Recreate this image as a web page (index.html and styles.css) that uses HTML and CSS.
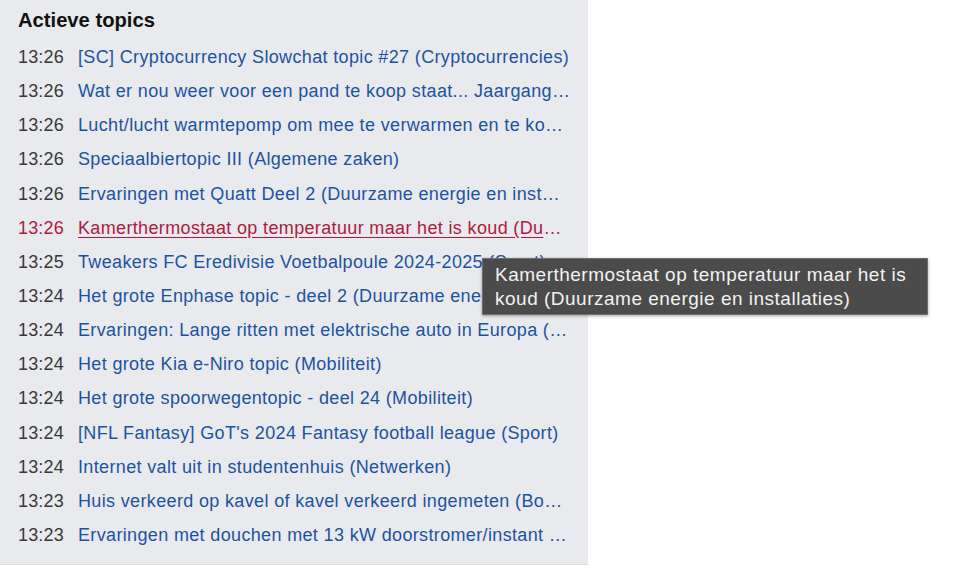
FILE: index.html
```html
<!DOCTYPE html>
<html>
<head>
<meta charset="utf-8">
<link rel="stylesheet" href="styles.css">
</head>
<body>
<div class="panel">
  <h2 class="title">Actieve topics</h2>
  <ul class="list">
    <li class="row"><span class="time">13:26</span><a class="topic" href="#">[SC] Cryptocurrency Slowchat topic #27 (Cryptocurrencies)</a></li>
    <li class="row"><span class="time">13:26</span><a class="topic" href="#">Wat er nou weer voor een pand te koop staat... Jaargang 4 (Wonen)</a></li>
    <li class="row"><span class="time">13:26</span><a class="topic" href="#">Lucht/lucht warmtepomp om mee te verwarmen en te koelen (Duurzame energie en installaties)</a></li>
    <li class="row"><span class="time">13:26</span><a class="topic" href="#">Speciaalbiertopic III (Algemene zaken)</a></li>
    <li class="row"><span class="time">13:26</span><a class="topic" href="#">Ervaringen met Quatt Deel 2 (Duurzame energie en installaties)</a></li>
    <li class="row hover"><span class="time">13:26</span><a class="topic" href="#">Kamerthermostaat op temperatuur maar het is koud (Duurzame energie en installaties)</a></li>
    <li class="row"><span class="time">13:25</span><a class="topic" href="#">Tweakers FC Eredivisie Voetbalpoule 2024-2025 (Sport)</a></li>
    <li class="row"><span class="time">13:24</span><a class="topic" href="#">Het grote Enphase topic - deel 2 (Duurzame energie en installaties)</a></li>
    <li class="row"><span class="time">13:24</span><a class="topic" href="#">Ervaringen: Lange ritten met elektrische auto in Europa (Mobiliteit)</a></li>
    <li class="row"><span class="time">13:24</span><a class="topic" href="#">Het grote Kia e-Niro topic (Mobiliteit)</a></li>
    <li class="row"><span class="time">13:24</span><a class="topic" href="#">Het grote spoorwegentopic - deel 24 (Mobiliteit)</a></li>
    <li class="row"><span class="time">13:24</span><a class="topic" href="#">[NFL Fantasy] GoT's 2024 Fantasy football league (Sport)</a></li>
    <li class="row"><span class="time">13:24</span><a class="topic" href="#">Internet valt uit in studentenhuis (Netwerken)</a></li>
    <li class="row"><span class="time">13:23</span><a class="topic" href="#">Huis verkeerd op kavel of kavel verkeerd ingemeten (Bouwen)</a></li>
    <li class="row"><span class="time">13:23</span><a class="topic" href="#">Ervaringen met douchen met 13 kW doorstromer/instant heater (Duurzame energie en installaties)</a></li>
  </ul>
</div>
<div class="tooltip">Kamerthermostaat op temperatuur maar het is<br>koud (Duurzame energie en installaties)</div>
</body>
</html>
```
FILE: styles.css
```css
html, body {
  margin: 0;
  padding: 0;
  background: #ffffff;
}
body {
  font-family: "Liberation Sans", Arial, sans-serif;
  width: 972px;
  height: 569px;
  overflow: hidden;
  position: relative;
}
.panel {
  width: 588px;
  height: 565px;
  box-sizing: border-box;
  background: #e9eaee;
  border-bottom: 1px solid #d9dadf;
  padding: 8px 18px 0 18px;
}
.title {
  margin: 0;
  font-size: 20.2px;
  font-weight: bold;
  color: #111111;
  line-height: 24px;
}
.list {
  list-style: none;
  margin: 8px 0 0 0;
  padding: 0;
}
.row {
  display: flex;
  align-items: baseline;
  height: 34.15px;
  line-height: 34px;
  font-size: 18px;
  color: #3b3b3d;
}
.time {
  flex: 0 0 60px;
  color: #38383a;
  letter-spacing: 0.15px;
}
.topic {
  flex: 1 1 auto;
  min-width: 0;
  white-space: nowrap;
  overflow: hidden;
  text-overflow: ellipsis;
  color: #1c53a0;
  text-decoration: none;
  letter-spacing: 0.35px;
}
.row.hover .time {
  color: #b01a3c;
}
.row.hover .topic {
  color: #b01a3c;
  text-decoration: underline;
  text-underline-offset: 3px;
}
.tooltip {
  position: absolute;
  left: 482px;
  top: 258px;
  width: 446px;
  height: 57px;
  box-sizing: border-box;
  background: #4b4b4b;
  border: 1px solid #6e6e6e;
  box-shadow: 0 1px 3px rgba(0,0,0,0.35);
  color: #f2f2f2;
  font-size: 19px;
  letter-spacing: 0.5px;
  line-height: 24px;
  padding: 4px 10px 0 12px;
  white-space: nowrap;
}
```
